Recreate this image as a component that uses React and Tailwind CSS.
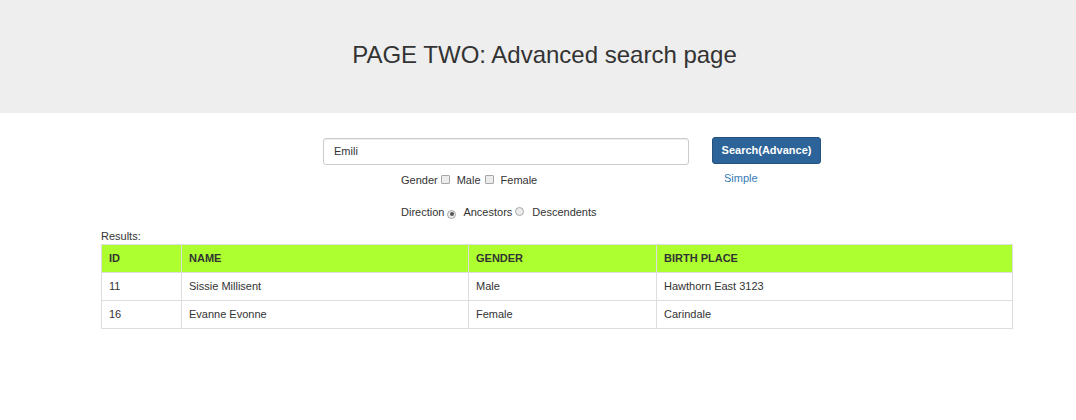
import React from 'react';

const rows = [
  { id: 11, name: 'Sissie Millisent', gender: 'Male', place: 'Hawthorn East 3123' },
  { id: 16, name: 'Evanne Evonne', gender: 'Female', place: 'Carindale' },
];

function Box({ round, checked }) {
  return (
    <span
      className={`inline-flex items-center justify-center w-[9px] h-[9px] border border-[#a8a8a8] bg-[#ececec] ${round ? 'rounded-full' : 'rounded-[1px]'}`}
    >
      {checked && <span className="w-[4px] h-[4px] rounded-full bg-[#555]" />}
    </span>
  );
}

export default function App() {
  return (
    <div className="min-h-screen bg-white text-[#333] text-[11px] font-['Liberation_Sans',Arial,sans-serif]">
      <div className="h-[113px] bg-[#eeeeee] flex items-center justify-center pl-[13px]">
        <h1 className="text-[24px] leading-none mt-[-4px]">PAGE TWO: Advanced search page</h1>
      </div>

      <div className="flex pl-[323px] pt-[24px]">
        <div className="w-[366px]">
          <div className="h-[27px] mt-[1px] border border-[#cccccc] rounded-[3px] flex items-center px-[10px] shadow-[inset_0_1px_1px_rgba(0,0,0,0.075)]">
            Emili
          </div>
          <div className="flex items-center pl-[78px] mt-[8px] h-[14px]">
            <span>Gender</span>
            <span className="ml-[3px] mt-[1px]"><Box /></span>
            <span className="ml-[7px]">Male</span>
            <span className="ml-[4px] mt-[1px]"><Box /></span>
            <span className="ml-[7px]">Female</span>
          </div>
          <div className="flex items-center pl-[78px] mt-[18px] h-[14px]">
            <span>Direction</span>
            <span className="ml-[3px] mt-[1px]"><Box round checked /></span>
            <span className="ml-[7px]">Ancestors</span>
            <span className="ml-[3px] mt-[1px]"><Box round /></span>
            <span className="ml-[8px]">Descendents</span>
          </div>
        </div>
        <div className="ml-[23px] flex flex-col">
          <button className="w-[109px] h-[27px] rounded-[3px] bg-[#2c6398] border border-[#23527e] text-white font-bold text-[11px]">
            Search(Advance)
          </button>
          <a className="ml-[12px] mt-[6px] text-[#337ab7]">Simple</a>
        </div>
      </div>

      <div className="ml-[101px] w-[912px] mt-[10px]">
        <div className="h-[14px] leading-[14px] mb-[1px]">Results:</div>
        <table className="w-full border-collapse border border-[#dddddd] table-fixed">
          <thead>
            <tr className="bg-[#adff2f] h-[28px]">
              <th className="w-[80px] border border-[#dddddd] text-left font-bold px-[7px]">ID</th>
              <th className="w-[287px] border border-[#dddddd] text-left font-bold px-[7px]">NAME</th>
              <th className="w-[188px] border border-[#dddddd] text-left font-bold px-[7px]">GENDER</th>
              <th className="border border-[#dddddd] text-left font-bold px-[7px]">BIRTH PLACE</th>
            </tr>
          </thead>
          <tbody>
            {rows.map(r => (
              <tr key={r.id} className="h-[28px]">
                <td className="border border-[#dddddd] px-[7px]">{r.id}</td>
                <td className="border border-[#dddddd] px-[7px]">{r.name}</td>
                <td className="border border-[#dddddd] px-[7px]">{r.gender}</td>
                <td className="border border-[#dddddd] px-[7px]">{r.place}</td>
              </tr>
            ))}
          </tbody>
        </table>
      </div>
    </div>
  );
}
